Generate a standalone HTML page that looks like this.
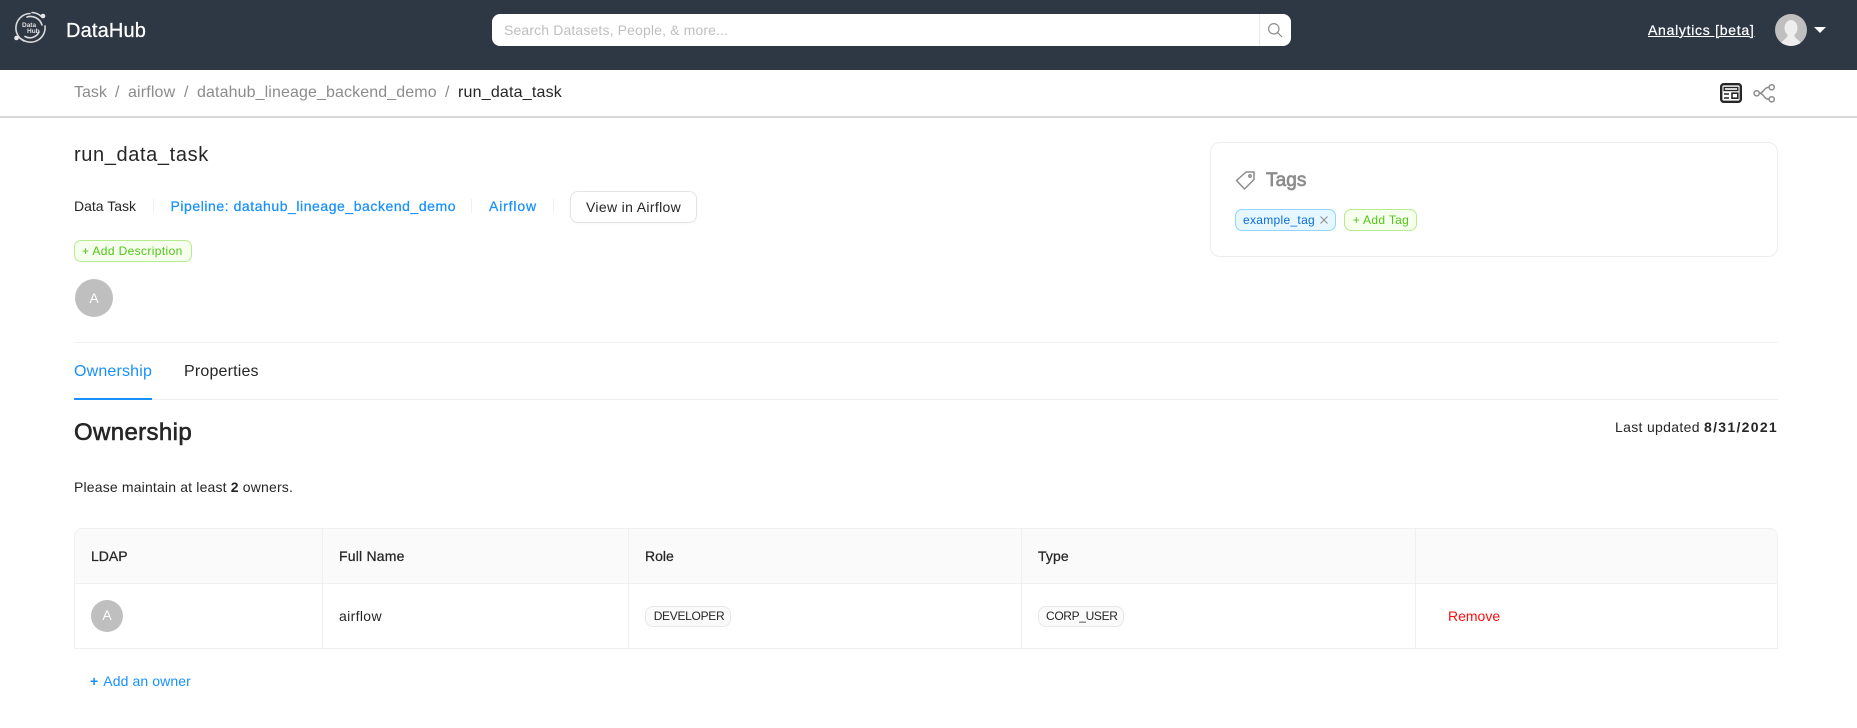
<!DOCTYPE html>
<html lang="en">
<head>
<meta charset="utf-8">
<title>run_data_task | DataHub</title>
<style>
html,body{margin:0;padding:0;background:#fff}
body{position:relative;width:1857px;height:728px;overflow:hidden;font-family:"Liberation Sans",Arial,sans-serif;font-size:14px;color:#262626}
.t{position:absolute;white-space:nowrap;line-height:20px}
.b{position:absolute;box-sizing:border-box}
.m{-webkit-text-stroke:.25px currentColor}
.g{color:#8c8c8c}
.blue{color:#1890ff}
.green{background:#f6ffed;border:1px solid #b7eb8f;border-radius:7px}
.gray{background:#fafafa;border:1px solid #e8e8e8;border-radius:8px}
.av{position:absolute;border-radius:50%;background:#bfbfbf;color:#fff;text-align:center}
.h{position:absolute;background:#f0f0f0}
svg{position:absolute;display:block}
</style>
</head>
<body>
<header class="b" style="left:0;top:0;width:1857px;height:70px;background:#2e3744"></header>
<svg style="left:12px;top:10px" width="38" height="36" viewBox="0 0 38 36" fill="none" stroke="#d9d9d9" stroke-width="1.6" stroke-linecap="round">
<path d="M12 31A14.5 14.5 0 0 1 18 3.5"/>
<path d="M15 7A12 12 0 0 1 30 15"/>
<path d="M20 2.5A15 15 0 0 1 30 7"/>
<path d="M13 26.5A10 10 0 0 0 27 22"/>
<path d="M7 27.5L11 30A14.5 14.5 0 0 0 33 16"/>
<circle cx="31" cy="6" r="2.3" fill="#e8e8e8" stroke="none"/><circle cx="4.5" cy="28" r="2.3" fill="#e8e8e8" stroke="none"/>
<text x="10" y="17" font-size="6.5" font-weight="700" fill="#e0e0e0" stroke="none" font-family="Liberation Sans,sans-serif">Data</text>
<text x="15" y="23" font-size="6.5" font-weight="700" fill="#e0e0e0" stroke="none" font-family="Liberation Sans,sans-serif">Hub</text>
</svg>
<div class="t m" style="left:66px;top:21px;font-size:20px;letter-spacing:.15px;color:#fff">DataHub</div>

<div class="b" style="left:492px;top:14px;width:799px;height:32px;background:#fff;border-radius:8px"></div>
<div class="t" style="left:504px;top:20px;letter-spacing:.14px;color:#bfbfbf">Search Datasets, People, &amp; more...</div>
<div class="b" style="left:1259px;top:14px;width:1px;height:32px;background:#e8e8e8"></div>
<svg style="left:1267px;top:22px" width="16" height="16" viewBox="0 0 16 16" fill="none" stroke="#8c8c8c" stroke-width="1.2"><circle cx="6.8" cy="6.8" r="5.2"/><path d="M10.6 10.6L15 15"/></svg>

<div class="t m" style="left:1648px;top:20px;letter-spacing:.72px;color:#fff;text-decoration:underline">Analytics [beta]</div>
<svg style="left:1775px;top:14px" width="32" height="32" viewBox="0 0 32 32"><defs><clipPath id="c"><circle cx="16" cy="16" r="16"/></clipPath></defs><circle cx="16" cy="16" r="16" fill="#bfbfbf"/><g clip-path="url(#c)" fill="#eeeeee"><ellipse cx="16" cy="14" rx="6.5" ry="8"/><path d="M5 32C6 26 12 26 13 20H19C20 26 26 26 27 32Z"/></g></svg>
<svg style="left:1814px;top:27px" width="12" height="6" viewBox="0 0 12 6"><path d="M0 0H12L6 6Z" fill="#fff"/></svg>

<div class="t g" style="left:74px;top:83px;font-size:16px">Task</div>
<div class="t g" style="left:115px;top:83px;font-size:16px">/</div>
<div class="t g" style="left:128px;top:83px;font-size:16px;letter-spacing:.15px">airflow</div>
<div class="t g" style="left:184px;top:83px;font-size:16px">/</div>
<div class="t g" style="left:197px;top:83px;font-size:16px;letter-spacing:.11px">datahub_lineage_backend_demo</div>
<div class="t g" style="left:445px;top:83px;font-size:16px">/</div>
<div class="t" style="left:458px;top:83px;font-size:16px;letter-spacing:.2px">run_data_task</div>
<div class="b" style="left:0;top:116px;width:1857px;height:1.5px;background:#d9d9d9"></div>

<svg style="left:1720px;top:83px" width="22" height="20" viewBox="0 0 22 20" fill="none" stroke="#262626"><rect x="1.2" y="1.2" width="19.6" height="17.6" rx="2.5" stroke-width="2.4"/><rect x="4.2" y="4.5" width="13.6" height="3" stroke-width="1.4"/><path d="M4 11H9M4 15H9" stroke-width="1.6"/><rect x="12" y="10.2" width="5.8" height="5" stroke-width="1.6"/></svg>
<svg style="left:1753px;top:84px" width="24" height="20" viewBox="0 0 24 20" fill="none" stroke="#8c8c8c" stroke-width="1.5"><circle cx="3.7" cy="9.3" r="2.6"/><circle cx="18.7" cy="3.3" r="2.6"/><circle cx="18.7" cy="15.3" r="2.6"/><path d="M6.3 9.3C11 9.3 10.5 3.3 16.1 3.3M6.3 9.3C11 9.3 10.5 15.3 16.1 15.3"/></svg>

<h1 class="t" style="margin:0;left:74px;top:145px;font-size:20px;font-weight:400;letter-spacing:.62px">run_data_task</h1>
<div class="t" style="left:74px;top:196px">Data Task</div>
<div class="b" style="left:153px;top:199px;width:1px;height:14px;background:#f0f0f0"></div>
<div class="t m blue" style="left:170.5px;top:196px;letter-spacing:.55px">Pipeline: datahub_lineage_backend_demo</div>
<div class="b" style="left:471px;top:199px;width:1px;height:14px;background:#f0f0f0"></div>
<div class="t m blue" style="left:489px;top:196px;letter-spacing:.85px">Airflow</div>
<div class="b" style="left:553px;top:199px;width:1px;height:14px;background:#f0f0f0"></div>
<div class="b" style="left:570px;top:191px;width:127px;height:32px;border:1px solid #e3e3e3;border-radius:8px;box-shadow:0 1px 2px rgba(0,0,0,.03)"></div>
<div class="t" style="left:586px;top:197px;letter-spacing:.34px">View in Airflow</div>

<div class="b green" style="left:74px;top:240px;width:118px;height:22px"></div>
<div class="t" style="left:82px;top:241px;font-size:12px;letter-spacing:.37px;color:#52c41a">+ Add Description</div>
<div class="av" style="left:75px;top:279px;width:38px;height:38px;line-height:38px;font-size:14px">A</div>

<div class="b" style="left:1210px;top:142px;width:568px;height:115px;border:1px solid #ededed;border-radius:10px"></div>
<svg style="left:1235px;top:170px" width="21" height="20" viewBox="0 0 21 20" fill="none" stroke="#8c8c8c" stroke-width="1.5" stroke-linejoin="round"><path d="M1.5 10.5L11 2H19V9.5L9.5 19Z"/><circle cx="15" cy="6" r="1.2"/></svg>
<div class="t g" style="left:1266px;top:171px;font-size:19px;letter-spacing:.1px;-webkit-text-stroke:.7px currentColor">Tags</div>
<div class="b" style="left:1235px;top:209px;width:101px;height:22px;background:#e6f7ff;border:1px solid #91d5ff;border-radius:7px"></div>
<div class="t" style="left:1243px;top:210px;font-size:12px;letter-spacing:.3px;color:#096dd9">example_tag</div>
<svg style="left:1319.5px;top:215.5px" width="8" height="8" viewBox="0 0 8 8" fill="none" stroke="#8c8c8c" stroke-width="1"><path d="M.5.5L7.5 7.5M7.5.5L.5 7.5"/></svg>
<div class="b green" style="left:1344px;top:209px;width:73px;height:22px"></div>
<div class="t" style="left:1352.7px;top:210px;font-size:12px;letter-spacing:.33px;color:#52c41a">+ Add Tag</div>

<div class="h" style="left:74px;top:342px;width:1704px;height:1px"></div>
<div class="t blue" style="left:74px;top:362px;font-size:16px;letter-spacing:.17px">Ownership</div>
<div class="t" style="left:184px;top:362px;font-size:16px;letter-spacing:.18px">Properties</div>
<div class="h" style="left:74px;top:399px;width:1704px;height:1px"></div>
<div class="b" style="left:74px;top:398px;width:78px;height:2px;background:#1890ff"></div>

<h2 class="t" style="margin:0;left:74px;top:423px;font-size:24px;font-weight:400;letter-spacing:.37px;-webkit-text-stroke:.6px currentColor">Ownership</h2>
<div class="t" style="left:1615px;top:417px;letter-spacing:.32px">Last updated <b style="letter-spacing:1.3px">8/31/2021</b></div>
<div class="t" style="left:74px;top:477px;letter-spacing:.17px">Please maintain at least <b>2</b> owners.</div>

<div class="b" style="left:74px;top:528px;width:1704px;height:56px;background:#fafafa;border-radius:8px 8px 0 0"></div>
<div class="b" style="left:74px;top:528px;width:1704px;height:121px;border:1px solid #f0f0f0;border-radius:8px 8px 0 0"></div>
<div class="h" style="left:74px;top:583px;width:1704px;height:1px"></div>
<div class="h" style="left:322px;top:529px;width:1px;height:119px"></div>
<div class="h" style="left:628px;top:529px;width:1px;height:119px"></div>
<div class="h" style="left:1021px;top:529px;width:1px;height:119px"></div>
<div class="h" style="left:1415px;top:529px;width:1px;height:119px"></div>
<div class="t m" style="left:91px;top:546px">LDAP</div>
<div class="t m" style="left:339px;top:546px;letter-spacing:.2px">Full Name</div>
<div class="t m" style="left:645px;top:546px">Role</div>
<div class="t m" style="left:1038px;top:546px;letter-spacing:.1px">Type</div>
<div class="av" style="left:91px;top:600px;width:32px;height:32px;line-height:31px;font-size:14px">A</div>
<div class="t" style="left:339px;top:606px;letter-spacing:.35px">airflow</div>
<div class="b gray" style="left:645px;top:606px;width:86px;height:21px"></div>
<div class="t" style="left:653.7px;top:606px;font-size:12px;letter-spacing:-.3px">DEVELOPER</div>
<div class="b gray" style="left:1038px;top:606px;width:86px;height:21px"></div>
<div class="t" style="left:1046px;top:606px;font-size:12px;letter-spacing:-.35px">CORP_USER</div>
<div class="t" style="left:1448px;top:606px;color:#ff0d0d">Remove</div>
<div class="t blue" style="left:90px;top:671px;font-weight:700">+</div>
<div class="t blue" style="left:103.3px;top:671px;letter-spacing:.1px">Add an owner</div>
</body>
</html>
